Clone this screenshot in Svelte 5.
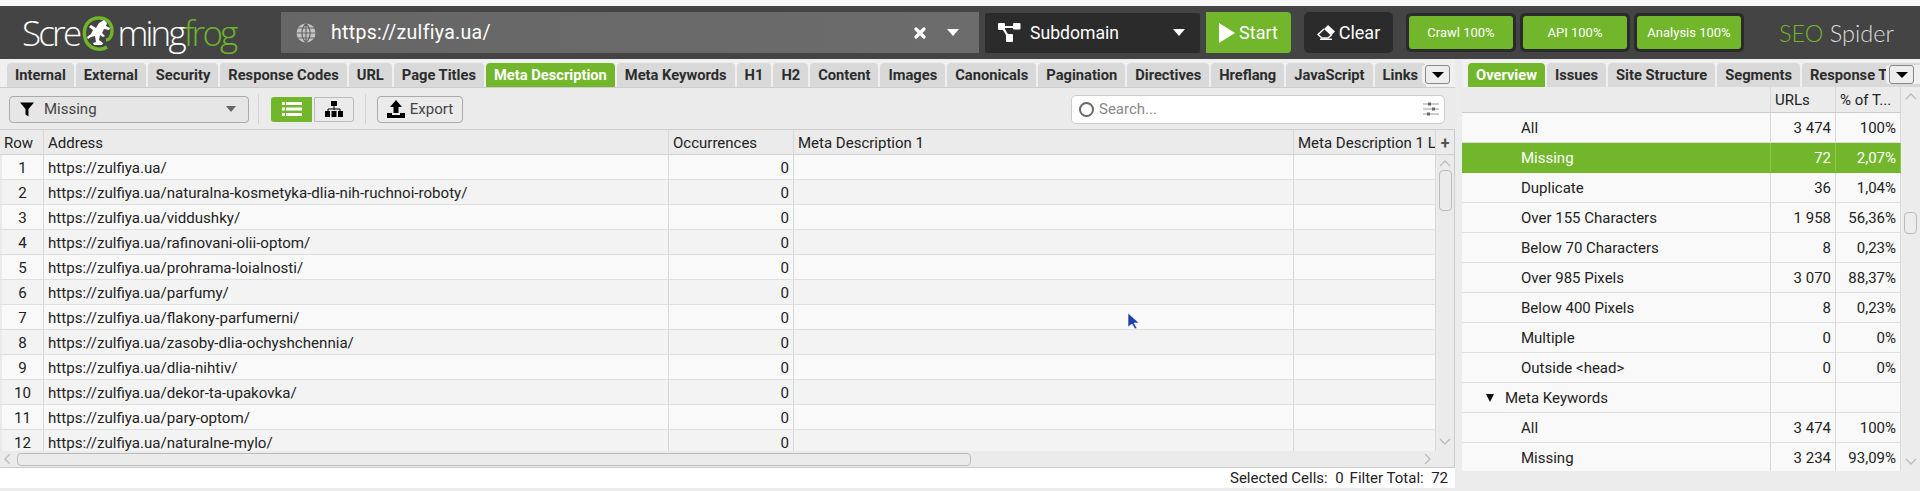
<script>
  const leftTabs = ['Internal','External','Security','Response Codes','URL','Page Titles','Meta Description','Meta Keywords','H1','H2','Content','Images','Canonicals','Pagination','Directives','Hreflang','JavaScript','Links'];
  const rightTabs = ['Overview','Issues','Site Structure','Segments','Response Times'];
  const urls = ['','naturalna-kosmetyka-dlia-nih-ruchnoi-roboty/','viddushky/','rafinovani-olii-optom/','prohrama-loialnosti/','parfumy/','flakony-parfumerni/','zasoby-dlia-ochyshchennia/','dlia-nihtiv/','dekor-ta-upakovka/','pary-optom/','naturalne-mylo/'];
  const overview = [
    {n:'All',u:'3 474',p:'100%'},{n:'Missing',u:'72',p:'2,07%',sel:true},{n:'Duplicate',u:'36',p:'1,04%'},
    {n:'Over 155 Characters',u:'1 958',p:'56,36%'},{n:'Below 70 Characters',u:'8',p:'0,23%'},{n:'Over 985 Pixels',u:'3 070',p:'88,37%'},
    {n:'Below 400 Pixels',u:'8',p:'0,23%'},{n:'Multiple',u:'0',p:'0%'},{n:'Outside <head>',u:'0',p:'0%'},
    {n:'Meta Keywords',u:'',p:'',group:true},{n:'All',u:'3 474',p:'100%'},{n:'Missing',u:'3 234',p:'93,09%'}
  ];
</script>

<div class="app">
  <div class="strip"></div>
  <header class="top">
    <div class="logo"><span>Scre</span><svg class="frog" viewBox="0 0 32 36" width="32" height="36"><path d="M25 31C19 35 6 34 3 22 0 9 8 2 17 2c8 0 13 5 13 13 0 6-3 9-6 9" fill="none" stroke="#6fb52c" stroke-width="3.400"/><path d="M9 9l5 3 3-5 5-3 3 3-1 3 4 2-1 2-5-1-2 4 3 3-2 1-3-2-1 5 4 3-1 2h-8l-1-2 3-1-1-6-4 1-3 2-1-2 4-3 2-4-4-3z" fill="#fff"/></svg><span>ming</span><span class="green">frog</span></div>
    <div class="url">
      <svg class="globe" viewBox="0 0 20 20" width="20" height="20"><circle cx="10" cy="10" r="9.5" fill="#c4c4c4"/><path d="M10 0v20M0 10h20M1.5 5h17M1.5 15h17M10 .5C4.5 6 4.5 14 10 19.500M10 .5c5.500 5.500 5.500 13.500 0 19" fill="none" stroke="#666" stroke-width="1.200"/></svg>
      <span class="urltext">https://zulfiya.ua/</span>
      <svg class="x" viewBox="0 0 12 12" width="12" height="12"><path d="M2 2l8 8M10 2l-8 8" stroke="#fff" stroke-width="3.200" stroke-linecap="round"/></svg>
      <i class="caret white"></i>
    </div>
    <div class="mode">
      <svg viewBox="0 0 23 19" width="23" height="19"><path d="M4 4h15M5 5l6 10" stroke="#fff" stroke-width="2.200"/><rect x="0" y="0" width="7" height="7" rx="1" fill="#fff"/><rect x="15" y="0" width="7.500" height="6.500" rx="1" fill="#fff"/><rect x="8" y="11" width="7" height="8" rx="1" fill="#fff"/></svg>
      <span>Subdomain</span><i class="caret white"></i>
    </div>
    <button class="start"><svg viewBox="0 0 16 20" width="16" height="20"><path d="M0 0l16 10L0 20z" fill="#fff"/></svg>Start</button>
    <button class="clear"><svg viewBox="0 0 18 15" width="18" height="15"><path d="M11 0l7 6.500-4 4L7 4z" fill="#fff"/><path d="M7 4L1 9.500 5 13h6l4-3.500" fill="none" stroke="#fff" stroke-width="1.500"/><path d="M3 14.300h12" stroke="#fff" stroke-width="1.400"/></svg>Clear</button>
    <div class="progress"><span>Crawl 100%</span></div>
    <div class="progress"><span>API 100%</span></div>
    <div class="progress"><span>Analysis 100%</span></div>
    <div class="seo"><span class="green">SEO</span> Spider</div>
  </header>

  <main class="panes">
    <section class="left">
      <nav class="tabs ltabs">
        {#each leftTabs as t}<div class="tab" class:active={t === 'Meta Description'}>{t}</div>{/each}
        <button class="more"><i class="caret black"></i></button>
      </nav>
      <div class="toolbar">
        <div class="filter">
          <svg viewBox="0 0 14 14" width="14" height="15"><path d="M0 0h14L8.500 6.500V14l-3-2V6.500z" fill="#000"/></svg>
          <span>Missing</span><i class="caret grey"></i>
        </div>
        <div class="sep"></div>
        <div class="view on"><svg viewBox="0 0 20 14" width="20" height="14"><path d="M0 1.500h20M0 7h20M0 12.500h20" stroke="#fff" stroke-width="3"/><path d="M3.500 0v14" stroke="#72b62b"/></svg></div>
        <div class="view tree"><svg viewBox="0 0 18 16" width="18" height="16"><rect x="6" y="0" width="6" height="5" fill="#000"/><path d="M9 5v4M3 11V8h12v3" fill="none" stroke="#000"/><rect x="0" y="10" width="5" height="6" fill="#000"/><rect x="6.500" y="10" width="5" height="6" fill="#000"/><rect x="13" y="10" width="5" height="6" fill="#000"/></svg></div>
        <div class="sep sep2"></div>
        <div class="export"><svg viewBox="0 0 18 18" width="18" height="18"><path d="M9 0l6 7h-3.500v6h-5V7H3z" fill="#000"/><path d="M0 13h5v2h8v-2h5v5H0z" fill="#000"/></svg><span>Export</span></div>
        <div class="search">
          <span class="ring"></span><span class="ph">Search...</span>
          <svg viewBox="0 0 16 16" width="16" height="16"><path d="M0 3h16M0 8h16M0 13h16" stroke="#999"/><path d="M5 1.500h3v3H5zM9 6.500h3v3H9zM4 11.500h3v3H4z" fill="#666"/></svg>
        </div>
      </div>
      <div class="tablewrap">
        <div class="grid head">
          <div>Row</div><div>Address</div><div>Occurrences</div><div>Meta Description 1</div><div>Meta Description 1 L</div><div class="plus">+</div>
        </div>
        <div class="bodywrap">
          <div class="tbody">
            {#each urls as u, i}
              <div class="grid row">
                <div class="c">{i + 1}</div><div>https://zulfiya.ua/{u}</div><div class="r">0</div><div></div><div></div>
              </div>
            {/each}
          </div>
          <div class="vbar">
            <svg class="chev" viewBox="0 0 12 7" width="12" height="7"><path d="M1 6l5-5 5 5" fill="none" stroke="#bbb" stroke-width="1.300"/></svg>
            <div class="vthumb"></div>
            <svg class="chev end" viewBox="0 0 12 7" width="12" height="7"><path d="M1 1l5 5 5-5" fill="none" stroke="#bbb" stroke-width="1.300"/></svg>
          </div>
        </div>
        <div class="hbar">
          <svg viewBox="0 0 7 12" width="7" height="12"><path d="M6 1L1 6l5 5" fill="none" stroke="#bbb" stroke-width="1.300"/></svg>
          <div class="hthumb"></div>
          <svg class="hend" viewBox="0 0 7 12" width="7" height="12"><path d="M1 1l5 5-5 5" fill="none" stroke="#bbb" stroke-width="1.300"/></svg>
        </div>
      </div>
      <footer class="status"><span>Selected Cells:&nbsp; 0</span><span>Filter Total:&nbsp; 72</span></footer>
    </section>

    <section class="right">
      <nav class="tabs rtabs">
        {#each rightTabs as t}<div class="tab" class:active={t === 'Overview'}>{t}</div>{/each}
        <button class="more"><i class="caret black"></i></button>
      </nav>
      <div class="ovwrap">
        <div class="ov">
          <div class="ovgrid ovhead"><div></div><div>URLs</div><div>% of T...</div></div>
          <div class="ovbody">
            {#each overview as o}
              <div class="ovgrid ovrow" class:sel={o.sel}>
                <div class="name" class:group={o.group}>{#if o.group}<i class="tri"></i>{/if}{o.n}</div><div class="r">{o.u}</div><div class="r">{o.p}</div>
              </div>
            {/each}
          </div>
        </div>
        <div class="ovbar">
          <svg viewBox="0 0 12 7" width="12" height="7"><path d="M1 6l5-5 5 5" fill="none" stroke="#bbb" stroke-width="1.300"/></svg>
          <div class="ovthumb"></div>
          <svg class="chev end" viewBox="0 0 12 7" width="12" height="7"><path d="M1 1l5 5 5-5" fill="none" stroke="#bbb" stroke-width="1.300"/></svg>
        </div>
      </div>
    </section>
  </main>
  <svg class="cursor" viewBox="0 0 12 18" width="12" height="18"><path d="M1 1v14l4-3 3 5 2-1-3-5h5z" fill="#1c3fb0" stroke="#fff" stroke-width=".6"/></svg>
</div>

<style>
  :global(body) { margin: 0; background: #ececec; }
  .app { position: relative; width: 1920px; height: 491px; overflow: hidden; background: #ececec; font: 15px Roboto, "Liberation Sans", sans-serif; color: #222; }
  .strip { height: 6px; background: #f8f8f8; }
  .top { height: 53px; background: #444; display: flex; align-items: center; box-sizing: border-box; }
  .green { color: #6fb52c; }
  .logo { width: 280px; padding-left: 22px; box-sizing: border-box; height: 53px; flex: none; display: flex; align-items: center; font: 300 35px "Open Sans", sans-serif; color: #fff; letter-spacing: -2.800px; }
  .frog { flex: none; margin: 2px 3px 0 3px; }
  .url { width: 698px; height: 41px; margin-left: 1px; background: linear-gradient(90deg, #666, #6c6c6c); display: flex; align-items: center; box-sizing: border-box; padding: 0 20px 0 15px; color: #fff; }
  .urltext { font-size: 19.500px; margin-left: 15px; flex: 1; letter-spacing: .3px; }
  .x { margin-right: 21px; }
  .caret { display: block; width: 0; height: 0; border-left: 6px solid transparent; border-right: 6px solid transparent; border-top: 7px solid #fff; }
  .caret.black { border-top-color: #000; border-left-width: 6px; border-right-width: 6px; border-top-width: 6px; }
  .caret.grey { border-top-color: #666; border-left-width: 5px; border-right-width: 5px; border-top-width: 6px; margin-left: auto; }
  .mode { width: 215px; height: 40px; margin-left: 6px; background: #2b2b2b; border-radius: 2px; display: flex; align-items: center; padding: 0 15px 0 13px; box-sizing: border-box; color: #fff; font-size: 17.600px; }
  .mode span { margin-left: 9px; flex: 1; }
  button { font-family: inherit; border: 0; padding: 0; }
  .start { width: 85px; height: 41px; margin-left: 6px; background: #72b62b; color: #fff; font-size: 18px; border-radius: 0 4px 4px 0; display: flex; align-items: center; justify-content: center; gap: 4px; }
  .clear { width: 89px; height: 41px; margin-left: 13px; background: #2b2b2b; color: #fff; font-size: 18px; border-radius: 5px; display: flex; align-items: center; justify-content: center; gap: 4px; }
  .progress { width: 110px; height: 39px; margin-left: 4px; background: #2b2b2b; border-radius: 5px; padding: 3px; box-sizing: border-box; color: #fff; font-size: 13px; }
  .clear + .progress { margin-left: 13px; }
  .progress span { display: flex; height: 100%; align-items: center; justify-content: center; background: #72b62b; border-radius: 3px; }
  .seo { margin-left: 35px; font: 300 23.500px Lato, sans-serif; color: #ddd; white-space: nowrap; }

  .panes { display: flex; height: 432px; }
  .left { width: 1455px; flex: none; display: flex; flex-direction: column; }
  .right { width: 458px; margin-left: 7px; flex: none; }
  .tabs { height: 24px; padding-top: 4px; box-sizing: content-box; display: flex; gap: 2px; overflow: hidden; }
  .ltabs { padding-left: 7px; background: #f0f0f0; position: relative; }
  .rtabs { padding-left: 6px; background: #f0f0f0; position: relative; }
  .tab { flex: none; padding: 0 8px; background: #d9d9d9; color: #2c2c2c; border-radius: 4px 4px 0 0; font-weight: 700; font-size: 14.700px; line-height: 25px; height: 24px; }
  .tab.active { background: #72b62b; color: #fff; }
  .more { position: absolute; right: 5px; top: 6px; width: 25px; height: 19px; background: #eee; border: 1px solid #888; border-radius: 3px; display: flex; align-items: center; justify-content: center; box-shadow: -3px 0 0 #f0f0f0, 10px 0 0 #f0f0f0; }
  .rtabs .more { right: 6px; }
  .toolbar { height: 43px; display: flex; align-items: center; padding: 1px 0 0 9px; box-sizing: border-box; background: #ebebeb; border-top: 1px solid #ccc; border-bottom: 1px solid #ccc; }
  .filter { width: 240px; height: 27px; box-sizing: border-box; border: 1px solid #aaa; border-radius: 4px; background: #e6e6e6; display: flex; align-items: center; padding: 0 12px 0 10px; gap: 10px; color: #444; font-size: 15px; }
  .sep { width: 1px; height: 30px; background: #d4d4d4; margin: 0 12px 0 9px; }
  .sep2 { margin: 0 11px 0 11px; }
  .view { width: 41px; height: 25px; display: flex; align-items: center; justify-content: center; box-sizing: border-box; border-radius: 3px 0 0 3px; }
  .view.on { background: #72b62b; }
  .view.tree { width: 40px; margin-left: 2px; border: 1px solid #bbb; border-radius: 0 3px 3px 0; }
  .export { width: 86px; height: 27px; box-sizing: border-box; border: 1px solid #aaa; border-radius: 4px; display: flex; align-items: center; justify-content: center; gap: 5px; color: #444; font-size: 15px; }
  .search { width: 374px; height: 29px; margin-left: auto; margin-right: 10px; box-sizing: border-box; background: #fff; border: 1px solid #ccc; border-radius: 5px; display: flex; align-items: center; padding: 0 5px 0 7px; color: #888; font-size: 15px; }
  .ring { width: 11px; height: 11px; border: 2px solid #666; border-radius: 50%; margin-right: 5px; }
  .ph { flex: 1; }
  .tablewrap { background: #ebebeb; border-right: 1px solid #ccc; width: 1455px; box-sizing: border-box; }
  .grid { display: grid; grid-template-columns: 44px 625px 125px 500px 142px 18px; }
  .grid > div { box-sizing: border-box; border-right: 1px solid #d8d8d8; padding: 0 4px; white-space: nowrap; overflow: hidden; }
  .grid > div:first-child { border-left: 2px solid #ebebeb; padding: 0 2px; }
  .head { height: 25px; line-height: 27px; background: #ebebeb; border-bottom: 1px solid #d0d0d0; box-sizing: border-box; color: #222; }
  .head .plus { border-right: 0; padding: 0; text-align: center; font-weight: 700; color: #555; font-size: 16px; }
  .bodywrap { display: flex; height: 296px; overflow: hidden; }
  .tbody { width: 1436px; flex: none; overflow: hidden; }
  .row { height: 25px; line-height: 27px; box-sizing: border-box; background: #f9f9f9; border-bottom: 1px solid #dfdfdf; color: #222; font-size: 15.100px; }
  .row > div { height: 24px; }
  .row:nth-child(even) { background: #f3f3f3; }
  .c { text-align: center; }
  .r { text-align: right; }
  .vbar { width: 18px; position: relative; display: flex; flex-direction: column; align-items: center; padding-top: 5px; box-sizing: border-box; }
  .vthumb { width: 13px; height: 41px; margin-top: 3px; border: 1px solid #bbb; border-radius: 4px; box-sizing: border-box; }
  .chev.end { margin-top: auto; margin-bottom: 6px; }
  .hbar { height: 17px; display: flex; align-items: center; padding-left: 4px; box-sizing: border-box; border-bottom: 1px solid #ccc; }
  .hthumb { width: 954px; height: 13px; margin-left: 6px; border: 1px solid #bbb; border-radius: 4px; box-sizing: border-box; }
  .hend { margin-left: auto; margin-right: 23px; }
  .status { height: 20px; background: #fff; display: flex; justify-content: flex-end; gap: 6px; align-items: center; padding-right: 7px; color: #222; }
  .ovwrap { display: flex; }
  .ov { width: 439px; flex: none; }
  .ovgrid { display: grid; grid-template-columns: 309px 65px 65px; }
  .ovgrid > div { box-sizing: border-box; border-right: 1px solid #d8d8d8; padding: 0 4px; white-space: nowrap; overflow: hidden; }
  .ovhead { height: 26px; line-height: 26px; background: #ebebeb; border-bottom: 1px solid #ccc; box-sizing: border-box; }
  .ovbody { height: 358px; overflow: hidden; }
  .ovrow { height: 30px; line-height: 30px; background: #f9f9f9; border-bottom: 1px solid #dfdfdf; box-sizing: border-box; }
  .ovrow > .name { padding-left: 59px; display: flex; align-items: center; }
  .ovrow > .name.group { padding-left: 24px; }
  .tri { width: 0; height: 0; border-left: 4.500px solid transparent; border-right: 4.500px solid transparent; border-top: 8px solid #111; margin-right: 11px; }
  .ovrow.sel { background: #72b62b; color: #fff; border-bottom-color: #72b62b; }
  .ovrow.sel > div { border-right-color: #8dc553; }
  .ovbar { width: 19px; height: 384px; display: flex; flex-direction: column; align-items: center; padding-top: 6px; box-sizing: border-box; }
  .ovthumb { width: 13px; height: 22px; margin-top: 112px; border: 1px solid #bbb; border-radius: 4px; box-sizing: border-box; }
  .cursor { position: absolute; left: 1127px; top: 312px; }
</style>
